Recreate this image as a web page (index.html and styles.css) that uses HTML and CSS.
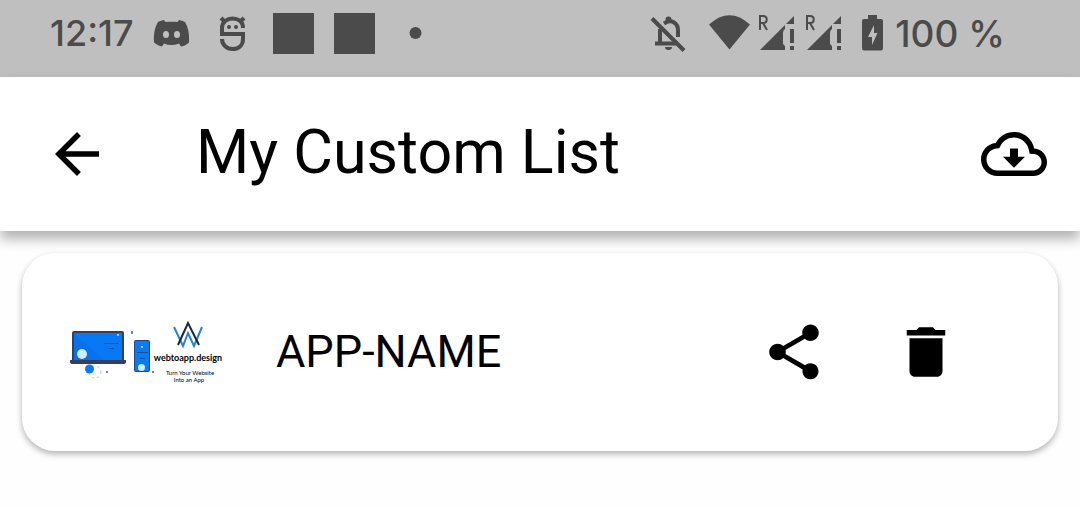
FILE: index.html
```html
<!DOCTYPE html>
<html lang="en">
<head>
  <meta charset="UTF-8" />
  <meta name="viewport" content="width=device-width, initial-scale=1.0" />
  <title>My Custom List</title>
  <link rel="stylesheet" href="styles.css">
</head>
<body>
  <div class="status-bar">
    <div class="status-left">
      <span class="status-text">12:17</span>
      <svg class="status-icon" viewBox="0 0 41 41" aria-hidden="true">
        <path fill-rule="evenodd" d="M13 7C10 7.500 8 8.500 7 9C4 14 2.500 20 3 29.500C6 32 8.500 33 11 33.500L13 30.500C18 32.500 23 32.500 28 30.500L30 33.500C33 33 35.500 32 38 29.500C38.500 20 37 14 34 9C32 8 30 7.500 28 7L26.500 9C22.500 8.500 18.500 8.500 14.500 9ZM15 18a3 3.500 0 1 1 0 7a3 3.500 0 1 1 0-7ZM26 18a3 3.500 0 1 1 0 7a3 3.500 0 1 1 0-7Z"/>
      </svg>
      <svg class="status-icon" viewBox="0 0 41 41" aria-hidden="true">
        <path class="line" d="M31 15C31 8 26 5.500 20.500 5.500S10 9 10 15V21H31V26C31 33 26 36 20.500 36S10 32 10 26"/>
        <path class="line" d="M9 5l4 4M32 5l-4 4"/>
        <circle cx="17" cy="14" r="2"/>
        <circle cx="24" cy="14" r="2"/>
      </svg>
      <span class="status-square"></span>
      <span class="status-square"></span>
      <svg class="status-icon" viewBox="0 0 41 41" aria-hidden="true">
        <circle cx="20.500" cy="20" r="6"/>
      </svg>
    </div>
    <div class="status-right">
      <svg class="status-icon bell" viewBox="0 0 41 41" aria-hidden="true">
        <path class="line" d="M12 16V30.500H30M7 30.500H28M16 10.500C24 5 30 11 30 17V24"/>
        <path d="M17.500 8V6.500a3 3 0 0 1 6 0V9zM17 34h7a3.500 3 0 0 1-7 0z"/>
        <path class="line" d="M4 5.500L36 37.500"/>
      </svg>
      <svg class="status-icon" viewBox="0 0 41 41" aria-hidden="true">
        <path d="M0 11.500Q20.500-7 41 11.500L20.500 36.500Z"/>
      </svg>
      <svg class="status-icon" viewBox="0 0 41 41" aria-hidden="true">
        <path class="thin" d="M4 17V3H7C12 3 12 10 7 10H4M7 10l4 7"/>
        <path d="M4 37L29 12V16Q27 17 27 20V31L29 33V37ZM30 11L38 3V11ZM34 16H38V30H34ZM34 33H38V37H34Z"/>
      </svg>
      <svg class="status-icon" viewBox="0 0 41 41" aria-hidden="true">
        <path class="thin" d="M4 17V3H7C12 3 12 10 7 10H4M7 10l4 7"/>
        <path d="M4 37L29 12V16Q27 17 27 20V31L29 33V37ZM30 11L38 3V11ZM34 16H38V30H34ZM34 33H38V37H34Z"/>
      </svg>
      <svg class="status-icon battery" viewBox="0 0 21 41" aria-hidden="true">
        <path fill-rule="evenodd" d="M6 2H15V6H19Q21 6 21 8V35Q21 37.500 19 37.500H2Q0 37.500 0 35V8Q0 6 2 6H6ZM12 12L6 24H10V32L15.500 20H12Z"/>
      </svg>
      <span class="status-text">100 %</span>
    </div>
  </div>

  <header class="toolbar">
    <button class="icon-btn" aria-label="Back">
      <svg viewBox="0 0 24 24"><path d="M20 11H7.830l5.590-5.590L12 4l-8 8 8 8 1.410-1.410L7.830 13H20z"/></svg>
    </button>
    <h1>My Custom List</h1>
    <button class="icon-btn" aria-label="Download">
      <svg viewBox="0 0 24 24"><path d="M19.350 10.040C18.670 6.590 15.640 4 12 4 9.110 4 6.600 5.640 5.350 8.040 2.340 8.360 0 10.910 0 14c0 3.310 2.690 6 6 6h13c2.760 0 5-2.240 5-5 0-2.640-2.050-4.780-4.650-4.960zM19 18H6c-2.210 0-4-1.790-4-4 0-2.050 1.530-3.760 3.560-3.970l1.070-.11.5-.95C8.080 7.140 9.940 6 12 6c2.620 0 4.880 1.860 5.390 4.430l.3 1.500 1.530.11c1.560.1 2.780 1.410 2.780 2.960 0 1.650-1.350 3-3 3zM13.450 10h-2.900v3H8l4 4 4-4h-2.550z"/></svg>
    </button>
  </header>

  <main class="list">
    <div class="card">
      <svg class="app-logo" viewBox="70 318 154 70" role="img" aria-label="webtoapp.design">
        <!-- laptop -->
        <rect x="72" y="332" width="52" height="31" rx="2" fill="#34405f"/>
        <path fill="#0879f5" d="M74 334H122V361H74Z"/>
        <path fill="#1265dc" d="M74 334L104 361H74Z" opacity=".4"/>
        <path fill="#34405f" d="M70 361H126V363Q126 365 123 365H73Q70 365 70 363Z"/>
        <circle cx="82" cy="355" r="5" fill="#cceeff"/>
        <circle cx="118" cy="336" r="1" fill="#cceeff"/>
        <path stroke="#164da0" d="M104 344.500H119M109 349.500H114"/>
        <circle cx="95" cy="373" r="6" fill="none" stroke="#b9c2cf" stroke-dasharray="2 3"/>
        <circle cx="89.500" cy="370" r="4.500" fill="#087bf5"/>
        <!-- phone -->
        <rect x="134" y="341" width="16" height="32" rx="2" fill="#224780"/>
        <rect x="135" y="342" width="14" height="30" rx="1" fill="#087bf5"/>
        <path stroke="#164da0" d="M137 353.500H148M140 359.500H145"/>
        <circle cx="142" cy="348" r="1" fill="#cceeff"/>
        <circle cx="141.500" cy="368.500" r="3.500" fill="#cceeff"/>
        <path fill="#6382b5" d="M131 332h2v3h-2zM106 372h2v2h-2zM152 372h2v2h-2z"/>
        <!-- brand mark -->
        <path fill="none" stroke="#2284d8" stroke-width="2" d="M174 328L183 347L188 334L194 347L202 328"/>
        <path fill="none" stroke="#1c2737" stroke-width="2" d="M178 346L188 324L199 346"/>
        <text class="logo-name" x="188" y="362">webtoapp.design</text>
        <text class="logo-sub" x="190" y="376">Turn Your Website</text>
        <text class="logo-sub" x="189" y="383">Into an App</text>
      </svg>
      <h2>APP-NAME</h2>
      <div class="actions">
        <button class="icon-btn" aria-label="Share">
          <svg viewBox="0 0 24 24"><path d="M18 16.080c-.76 0-1.440.3-1.960.77L8.910 12.700c.05-.23.09-.46.09-.7s-.04-.47-.09-.7l7.050-4.110c.54.5 1.250.81 2.040.81 1.660 0 3-1.340 3-3s-1.340-3-3-3-3 1.340-3 3c0 .24.04.47.09.7L8.040 9.810C7.500 9.310 6.790 9 6 9c-1.660 0-3 1.340-3 3s1.340 3 3 3c.79 0 1.500-.31 2.040-.81l7.120 4.160c-.05.21-.08.43-.08.65 0 1.610 1.310 2.920 2.920 2.920s2.920-1.310 2.920-2.920-1.310-2.920-2.920-2.920z"/></svg>
        </button>
        <button class="icon-btn" aria-label="Delete">
          <svg viewBox="0 0 24 24"><path d="M6 19c0 1.100.9 2 2 2h8c1.100 0 2-.9 2-2V7H6v12zM19 4h-3.500l-1-1h-5l-1 1H5v2h14V4z"/></svg>
        </button>
      </div>
    </div>
  </main>
</body>
</html>
```
FILE: styles.css
```css
* {
  box-sizing: border-box;
  margin: 0;
  padding: 0;
}
body {
  background-color: #fefefe;
  color: #000;
  font-family: Roboto, sans-serif;
}
.status-bar {
  display: flex;
  justify-content: space-between;
  height: 77px;
  padding: 13px 75px 0 50px;
  background-color: #bfbfbf;
  color: #4b4b4b;
}
.status-left, .status-right {
  display: flex;
  align-items: center;
  height: 41px;
}
.status-left {
  gap: 20px;
}
.status-right {
  gap: 6px;
}
.status-text {
  margin-right: -3px;
  font-family: Inter, sans-serif;
  font-size: 36px;
  font-weight: 500;
  line-height: 41px;
  white-space: nowrap;
}
.status-right .status-text {
  margin-right: 0;
  font-size: 37px;
}
.status-icon {
  width: 41px;
  height: 41px;
  fill: #4b4b4b;
}
.status-icon .line, .status-icon .thin {
  fill: none;
  stroke: #4b4b4b;
  stroke-width: 4;
}
.status-icon .thin {
  stroke-width: 2;
}
.bell {
  margin-right: 14px;
}
.battery {
  width: 21px;
  margin: 0 6px 0 12px;
}
.status-square {
  width: 41px;
  height: 41px;
  background-color: #4b4b4b;
}
.toolbar {
  display: flex;
  align-items: center;
  height: 154px;
  padding: 0 33px 0 44px;
  background-color: #fff;
  box-shadow: 0 8px 12px rgba(0,0,0,0.3);
}
.toolbar h1 {
  flex: 1;
  margin-left: 86px;
  padding-bottom: 4px;
  font-size: 61px;
  font-weight: 400;
  line-height: 72px;
}
.icon-btn {
  width: 66px;
  height: 66px;
  border: none;
  background: none;
  cursor: pointer;
}
.icon-btn svg {
  display: block;
  width: 100%;
  height: 100%;
}
.list {
  padding: 22px;
}
.card {
  display: flex;
  align-items: center;
  min-height: 198px;
  padding: 0 99px 0 48px;
  background-color: #fff;
  border-radius: 33px;
  box-shadow: 0 3px 6px rgba(0,0,0,0.3);
}
.app-logo {
  width: 154px;
  height: 70px;
}
.logo-name, .logo-sub {
  font-family: Lato, sans-serif;
  text-anchor: middle;
}
.logo-name {
  font-size: 9px;
  font-weight: 700;
}
.logo-sub {
  font-size: 6px;
}
.card h2 {
  flex: 1;
  margin-left: 52px;
  padding-bottom: 2px;
  font-size: 45px;
  font-weight: 400;
}
.actions {
  display: flex;
  gap: 66px;
}
```
